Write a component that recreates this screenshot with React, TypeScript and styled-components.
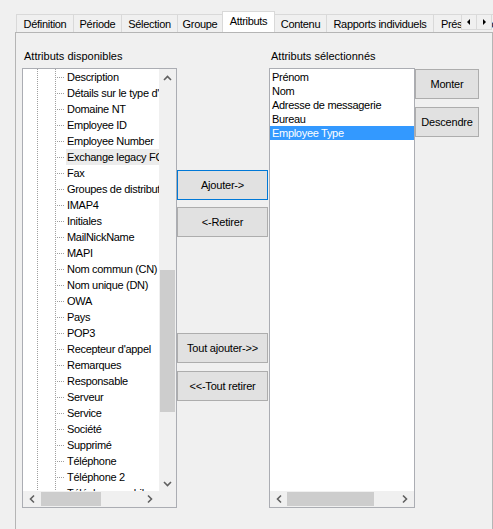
import React, { FC } from "react";
import styled, { createGlobalStyle, css } from "styled-components";

type Dir = "up" | "down" | "left" | "right";

const tabs = [
  { label: "Définition", w: 58 },
  { label: "Période", w: 49 },
  { label: "Sélection", w: 57 },
  { label: "Groupe", w: 46 },
  { label: "Attributs", w: 53, active: true },
  { label: "Contenu", w: 53 },
  { label: "Rapports individuels", w: 108 },
  { label: "Présentation", w: 74 },
];

const available = [
  "Description",
  "Détails sur le type d'adresse",
  "Domaine NT",
  "Employee ID",
  "Employee Number",
  "Exchange legacy FQDN",
  "Fax",
  "Groupes de distribution",
  "IMAP4",
  "Initiales",
  "MailNickName",
  "MAPI",
  "Nom commun (CN)",
  "Nom unique (DN)",
  "OWA",
  "Pays",
  "POP3",
  "Recepteur d'appel",
  "Remarques",
  "Responsable",
  "Serveur",
  "Service",
  "Société",
  "Supprimé",
  "Téléphone",
  "Téléphone 2",
  "Téléphone mobile",
];

const selected = ["Prénom", "Nom", "Adresse de messagerie", "Bureau", "Employee Type"];

const chevrons: Record<Dir, string> = {
  up: "M5 11 L8.5 7.5 L12 11",
  down: "M5 8 L8.5 11.5 L12 8",
  left: "M11 4.5 L7.5 8 L11 11.5",
  right: "M6 4.5 L9.5 8 L6 11.5",
};

const Chevron: FC<{ dir: Dir }> = ({ dir }) => (
  <svg width={17} height={dir === "up" || dir === "down" ? 17 : 16} style={{ flex: "none" }}>
    <path d={chevrons[dir]} stroke="#606060" strokeWidth={1.6} fill="none" />
  </svg>
);

const TreeLines: FC = () => (
  <svg width={43} height={16} shapeRendering="crispEdges" style={{ flex: "none" }}>
    <line x1={14.5} y1={0} x2={14.5} y2={16} stroke="#a0a0a0" strokeDasharray="1 1" />
    <line x1={32.5} y1={0} x2={32.5} y2={16} stroke="#a0a0a0" strokeDasharray="1 1" />
    <line x1={34} y1={8.5} x2={42} y2={8.5} stroke="#a0a0a0" strokeDasharray="1 1" />
  </svg>
);

const HScrollBar: FC<{ offset: number; thumb: number }> = ({ offset, thumb }) => (
  <HScroll>
    <Chevron dir="left" />
    <HTrack>
      <HThumb style={{ marginLeft: offset, width: thumb }} />
    </HTrack>
    <Chevron dir="right" />
  </HScroll>
);

const App: FC = () => {
  return (
    <Root>
      <GlobalStyle />
      <TabStrip>
        {tabs.map((t) => (
          <Tab key={t.label} $w={t.w} $active={!!t.active}>
            {t.label}
          </Tab>
        ))}
        <TabArrows>
          <TabArrow>
            <svg width={14} height={14}>
              <polygon points="8,4 5,7 8,10" fill="#000" />
            </svg>
          </TabArrow>
          <TabArrow>
            <svg width={14} height={14}>
              <polygon points="6,4 9,7 6,10" fill="#000" />
            </svg>
          </TabArrow>
        </TabArrows>
      </TabStrip>

      <Panel>
        <Column $w={155}>
          <Label>Attributs disponibles</Label>
          <TreeBox>
            <TreeContent>
              {available.map((name) => (
                <TreeRow key={name}>
                  <TreeLines />
                  <TreeText $hot={name.startsWith("Exchange")}>{name}</TreeText>
                </TreeRow>
              ))}
            </TreeContent>
            <VScroll>
              <Chevron dir="up" />
              <VTrack>
                <VThumb />
              </VTrack>
              <Chevron dir="down" />
            </VScroll>
            <HScrollBar offset={1} thumb={60} />
            <Corner />
          </TreeBox>
        </Column>

        <ButtonColumn $w={91} $top={137}>
          <Button $focus>Ajouter-&gt;</Button>
          <Button $mt={7}>&lt;-Retirer</Button>
          <Button $mt={96}>Tout ajouter-&gt;&gt;</Button>
          <Button $mt={8}>&lt;&lt;-Tout retirer</Button>
        </ButtonColumn>

        <Column $w={146} $ml={1}>
          <Label>Attributs sélectionnés</Label>
          <ListBox>
            <ListContent>
              {selected.map((name) => (
                <ListItem key={name} $selected={name === "Employee Type"}>
                  {name}
                </ListItem>
              ))}
            </ListContent>
            <HScrollBar offset={0} thumb={87} />
          </ListBox>
        </Column>

        <ButtonColumn $w={64} $top={36}>
          <Button>Monter</Button>
          <Button $mt={8}>Descendre</Button>
        </ButtonColumn>
      </Panel>
    </Root>
  );
};

const GlobalStyle = createGlobalStyle`
  html, body {
    margin: 0;
    padding: 0;
    background: #f0f0f0;
    overflow: hidden;
  }
  body {
    font-family: "Liberation Sans", Arial, sans-serif;
    font-size: 11px;
    color: #000;
  }
`;

const Root = styled.div`
  width: 493px;
  height: 529px;
  overflow: hidden;
  background: #f0f0f0;
`;

const TabStrip = styled.div`
  position: relative;
  display: flex;
  align-items: flex-end;
  height: 32px;
  padding-left: 16px;
  overflow: hidden;
  z-index: 1;
`;

const Tab = styled.div<{ $w: number; $active: boolean }>`
  flex: none;
  box-sizing: border-box;
  width: ${(p) => p.$w}px;
  height: 18px;
  margin-left: -1px;
  border: 1px solid #d9d9d9;
  border-bottom: none;
  background: #f0f0f0;
  text-align: center;
  line-height: 18px;
  letter-spacing: -0.3px;
  white-space: nowrap;

  &:first-child {
    margin-left: 0;
  }

  ${(p) =>
    p.$active &&
    css`
      height: 22px;
      margin-bottom: -1px;
      background: #fff;
      line-height: 19px;
      position: relative;
      z-index: 2;
    `}
`;

const TabArrows = styled.div`
  position: absolute;
  top: 14px;
  right: 1px;
  display: flex;
  z-index: 3;
`;

const TabArrow = styled.div`
  display: flex;
  align-items: center;
  justify-content: center;
  box-sizing: border-box;
  width: 16px;
  height: 16px;
  border: 1px solid #dadada;
  background: #f0f0f0;

  & + & {
    margin-left: -1px;
  }
`;

const Panel = styled.div`
  display: flex;
  align-items: flex-start;
  box-sizing: border-box;
  width: 478px;
  height: 510px;
  margin-left: 15px;
  padding-left: 6px;
  border: 1px solid #b5b5b5;
  background: #f0f0f0;
`;

const Column = styled.div<{ $w: number; $ml?: number }>`
  flex: none;
  width: ${(p) => p.$w}px;
  margin-left: ${(p) => p.$ml ?? 0}px;
  padding-top: 17px;
`;

const Label = styled.div`
  height: 13px;
  line-height: 13px;
  padding-left: 2px;
  margin-bottom: 5px;
  white-space: nowrap;
`;

const boxFrame = css`
  box-sizing: border-box;
  height: 440px;
  border: 1px solid #abadb3;
  background: #fff;
  display: grid;
  overflow: hidden;
`;

const TreeBox = styled.div`
  ${boxFrame}
  grid-template-columns: 1fr 17px;
  grid-template-rows: 1fr 16px;
`;

const TreeContent = styled.div`
  overflow: hidden;
  min-width: 0;
`;

const TreeRow = styled.div`
  display: flex;
  height: 16px;
`;

const TreeText = styled.div<{ $hot: boolean }>`
  flex: 1;
  padding-left: 1px;
  line-height: 16px;
  letter-spacing: -0.3px;
  white-space: nowrap;
  background: ${(p) => (p.$hot ? "#ececec" : "transparent")};
`;

const VScroll = styled.div`
  display: flex;
  flex-direction: column;
  background: #f0f0f0;
`;

const VTrack = styled.div`
  flex: 1;
  padding-top: 184px;
`;

const VThumb = styled.div`
  height: 142px;
  margin: 0 1px;
  background: #cdcdcd;
`;

const HScroll = styled.div`
  display: flex;
  align-items: stretch;
  background: #f0f0f0;
  min-width: 0;
`;

const HTrack = styled.div`
  flex: 1;
  padding-top: 1px;
`;

const HThumb = styled.div`
  height: 14px;
  background: #cdcdcd;
`;

const Corner = styled.div`
  background: #f0f0f0;
`;

const ListBox = styled.div`
  ${boxFrame}
  grid-template-rows: 1fr 16px;
`;

const ListContent = styled.div`
  padding-top: 1px;
  overflow: hidden;
`;

const ListItem = styled.div<{ $selected: boolean }>`
  height: 14px;
  line-height: 14px;
  padding-left: 2px;
  letter-spacing: -0.3px;
  white-space: nowrap;
  ${(p) =>
    p.$selected &&
    css`
      background: #3399ff;
      color: #fff;
    `}
`;

const ButtonColumn = styled.div<{ $w: number; $top: number }>`
  flex: none;
  display: flex;
  flex-direction: column;
  width: ${(p) => p.$w}px;
  padding-top: ${(p) => p.$top}px;
`;

const Button = styled.div<{ $mt?: number; $focus?: boolean }>`
  box-sizing: border-box;
  height: 30px;
  margin-top: ${(p) => p.$mt ?? 0}px;
  display: flex;
  align-items: center;
  justify-content: center;
  border: 1px solid ${(p) => (p.$focus ? "#0078d7" : "#adadad")};
  background: #e1e1e1;
  letter-spacing: -0.2px;
  white-space: nowrap;
`;

export default App;
